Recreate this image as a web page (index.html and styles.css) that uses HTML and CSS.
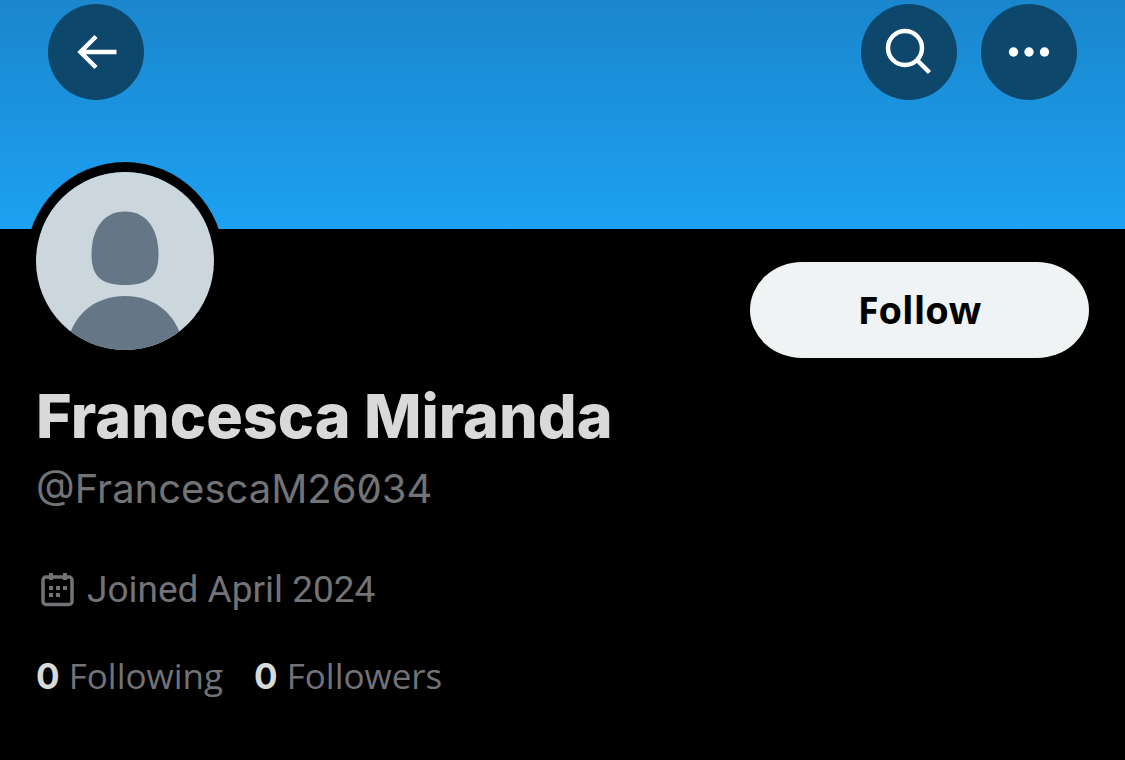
FILE: index.html
```html
<!DOCTYPE html>
<html lang="en">
<head>
    <meta charset="UTF-8">
    <meta name="viewport" content="width=device-width, initial-scale=1.0">
    <title>Francesca Miranda (@FrancescaM26034)</title>
    <link rel="stylesheet" href="styles.css">
</head>
<body>
    <header class="banner">
        <button class="icon-button" type="button" aria-label="Back">
            <svg viewBox="0 0 96 96" fill="none" stroke="#fff" stroke-width="4.500">
                <path d="M68.500 48H32M48 32.500L32.500 48L48 63.500"/>
            </svg>
        </button>
        <div class="banner-actions">
            <button class="icon-button" type="button" aria-label="Search">
                <svg viewBox="0 0 96 96" fill="none" stroke="#fff" stroke-width="4.500">
                    <circle cx="44" cy="44" r="17"/>
                    <path d="M56 56l12.500 12.500"/>
                </svg>
            </button>
            <button class="icon-button" type="button" aria-label="More">
                <svg viewBox="0 0 96 96" fill="#fff">
                    <circle cx="32.500" cy="48" r="4.700"/>
                    <circle cx="48" cy="48" r="4.700"/>
                    <circle cx="63.500" cy="48" r="4.700"/>
                </svg>
            </button>
        </div>
    </header>

    <main class="profile">
        <div class="profile-top">
            <svg class="avatar" viewBox="0 0 178 178" role="img" aria-label="Profile picture">
                <rect width="178" height="178" fill="#ccd6dd"/>
                <path fill="#657786" d="M89 39.500c22 0 33.500 18 33.500 43 0 21-9 30.500-33.500 30.500s-33.500-9.500-33.500-30.500c0-25 11.500-43 33.500-43z"/>
                <path fill="#657786" d="M30 178c4-34 28-54 59-54s55 20 59 54z"/>
            </svg>
            <button class="follow" type="button">Follow</button>
        </div>

        <h1 class="name">Francesca Miranda</h1>
        <p class="handle">@FrancescaM26034</p>

        <p class="joined">
            <svg class="calendar" viewBox="0 0 34 34" fill="currentColor">
                <rect x="2" y="4" width="29" height="27.500" rx="3" fill="none" stroke="currentColor" stroke-width="3.500"/>
                <path d="M8 0h4v7H8zM22 0h4v7h-4zM8 13h4v4H8zM15 13h4v4h-4zM22 13h4v4h-4zM8 20h4v4H8zM15 20h4v4h-4z"/>
            </svg>
            Joined April 2024
        </p>

        <nav class="stats">
            <a href="#following"><strong>0</strong> Following</a>
            <a href="#followers"><strong>0</strong> Followers</a>
        </nav>
    </main>
</body>
</html>
```
FILE: styles.css
```css
body {
    margin: 0;
    background-color: #000;
    color: #727377;
    font-family: "Open Sans", Arial, sans-serif;
}
.banner {
    display: flex;
    justify-content: space-between;
    align-items: flex-start;
    box-sizing: border-box;
    height: 229px;
    padding: 4px 48px;
    background: linear-gradient(#1a86cd, #1da1f2);
}
.banner-actions {
    display: flex;
    gap: 24px;
}
.icon-button {
    width: 96px;
    height: 96px;
    padding: 0;
    border: none;
    border-radius: 50%;
    background-color: #0d476b;
    cursor: pointer;
}
.icon-button svg {
    display: block;
}
.profile {
    padding: 0 36px;
}
.profile-top {
    display: flex;
    justify-content: space-between;
    align-items: flex-start;
}
.avatar {
    width: 178px;
    height: 178px;
    margin-top: -57px;
    border-radius: 50%;
    box-shadow: 0 0 0 10px #000;
}
.follow {
    width: 339px;
    height: 96px;
    margin-top: 33px;
    padding: 0 0 2px;
    border: none;
    border-radius: 52px / 48px;
    background-color: #eff3f4;
    color: #000;
    font-family: "Open Sans", Arial, sans-serif;
    font-size: 38px;
    font-weight: 700;
    cursor: pointer;
}
.name {
    margin: 19px 0 0;
    color: #d9d9d9;
    font-family: Inter, Arial, sans-serif;
    font-size: 61px;
    font-weight: 800;
    line-height: 78px;
}
.handle {
    margin: 5px 0 0;
    font-family: Inter, Arial, sans-serif;
    font-feature-settings: "zero";
    font-size: 40px;
    line-height: 58px;
}
.joined {
    display: flex;
    align-items: center;
    gap: 12px;
    margin: 48px 0 0;
    padding-left: 5px;
    font-family: Roboto, Arial, sans-serif;
    font-size: 37px;
    line-height: 48px;
}
.calendar {
    width: 34px;
    height: 34px;
}
.stats {
    display: flex;
    gap: 31px;
    margin-top: 38px;
    font-size: 35px;
    line-height: 48px;
}
.stats a {
    color: inherit;
    text-decoration: none;
}
.stats strong {
    color: #d9d9d9;
    font-family: Inter, Arial, sans-serif;
}
```
